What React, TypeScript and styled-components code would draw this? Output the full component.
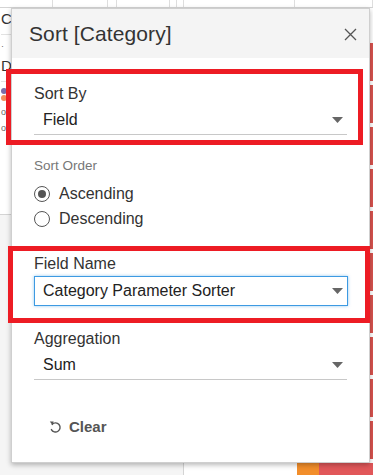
import styled, { createGlobalStyle } from "styled-components";

const GlobalStyle = createGlobalStyle`
  html, body {
    margin: 0;
    padding: 0;
    background: #ffffff;
  }
  * {
    box-sizing: border-box;
  }
`;

const barRows = [
  { width: 190, segments: ["#d9534f"] },
  { width: 180, segments: ["#d9534f"] },
  { width: 175, segments: ["#d9534f"] },
  { width: 170, segments: ["#d9534f"] },
  { width: 168, segments: ["#d9534f"] },
  { width: 160, segments: ["#d9534f"] },
  { width: 150, segments: ["#d9534f"] },
  { width: 140, segments: ["#d9534f"] },
  { width: 130, segments: ["#d9534f"] },
  { width: 120, segments: ["#d9534f"] },
];

const Caret = () => (
  <svg width="11" height="6" viewBox="0 0 11 6">
    <path d="M0 0 L11 0 L5.5 6 Z" fill="#666" />
  </svg>
);

const CloseIcon = () => (
  <svg width="13" height="13" viewBox="0 0 13 13">
    <path d="M1 1 L12 12 M12 1 L1 12" stroke="#555" strokeWidth="1.3" fill="none" />
  </svg>
);

const UndoIcon = () => (
  <svg width="13" height="14" viewBox="0 0 13 14">
    <path
      d="M3.2 4.2 A4.6 4.6 0 1 1 2.4 9.6"
      stroke="#555"
      strokeWidth="1.4"
      fill="none"
      strokeLinecap="round"
    />
    <path d="M0.8 1.4 L4.6 1.6 L3.8 5.4 Z" fill="#555" />
  </svg>
);

const App = () => {
  return (
    <>
      <GlobalStyle />
      <Stage>
        <Workspace>
          <Toolbar>
            <ToolCell $width={53} />
            <ToolCell $width={55} />
            <ToolCell $width={9} />
            <ToolCell $width={53} />
            <ToolCell $width={7} />
            <ToolCell $width={7} />
            <ToolCell $width={111} />
            <ToolCell $width={78} />
          </Toolbar>
          <LeftPane>
            <PaneCard>
              <PaneTitle>C</PaneTitle>
              <PaneRow>·</PaneRow>
              <PaneTitle>D</PaneTitle>
              <Legend>
                <Dot $color="#7b6ea8" />
                <Dot $color="#f28e5b" />
              </Legend>
              <PaneRow>oo</PaneRow>
              <PaneRow>oo</PaneRow>
            </PaneCard>
            <PaneRest />
          </LeftPane>
          <Chart>
            {barRows.map((row, i) => (
              <BarRow key={i}>
                {row.segments.map((c, j) => (
                  <Bar key={j} $color={c} style={{ width: row.width }} />
                ))}
              </BarRow>
            ))}
            <BarRow>
              <Bar $color="#f28e2b" style={{ width: 22 }} />
              <Bar $color="#e15759" style={{ width: 55 }} />
            </BarRow>
          </Chart>
        </Workspace>

        <Dialog>
          <Header>
            <Title>Sort [Category]</Title>
            <CloseButton>
              <CloseIcon />
            </CloseButton>
          </Header>
          <Body>
            <Highlight $ml={-6} $mr={6} $pl={23} $pr={11} $pt={10} $pb={5}>
              <Label>Sort By</Label>
              <LineSelect>
                <SelectText>Field</SelectText>
                <Caret />
              </LineSelect>
            </Highlight>

            <Section $mt={13}>
              <SubLabel>Sort Order</SubLabel>
              <RadioGroup>
                <RadioRow>
                  <RadioCircle $checked />
                  <RadioText>Ascending</RadioText>
                </RadioRow>
                <RadioRow>
                  <RadioCircle />
                  <RadioText>Descending</RadioText>
                </RadioRow>
              </RadioGroup>
            </Section>

            <Highlight $ml={-4} $mr={-1} $pl={21} $pr={17} $pt={3} $pb={12} $mt={15}>
              <Label>Field Name</Label>
              <BoxSelect>
                <SelectText>Category Parameter Sorter</SelectText>
                <Caret />
              </BoxSelect>
            </Highlight>

            <Section $mt={6}>
              <Label>Aggregation</Label>
              <LineSelect>
                <SelectText>Sum</SelectText>
                <Caret />
              </LineSelect>
            </Section>

            <ClearButton>
              <UndoIcon />
              <span>Clear</span>
            </ClearButton>
          </Body>
        </Dialog>
      </Stage>
    </>
  );
};

const Stage = styled.div`
  position: relative;
  width: 373px;
  height: 475px;
  overflow: hidden;
  font-family: "Liberation Sans", Arial, sans-serif;
  color: #333;
`;

const Workspace = styled.div`
  display: grid;
  grid-template-columns: 184px 1fr;
  grid-template-rows: 8px 1fr;
  width: 100%;
  height: 100%;
`;

const Toolbar = styled.div`
  grid-column: 1 / 3;
  display: flex;
  background: #fff;
  border-bottom: 1px solid #d4d4d4;
`;

const ToolCell = styled.div<{ $width: number }>`
  width: ${(p) => p.$width}px;
  border-right: 1px solid #dedede;
`;

const LeftPane = styled.div`
  display: flex;
  flex-direction: column;
  border-right: 1px solid #d4d4d4;
`;

const PaneCard = styled.div`
  height: 207px;
  background: #fff;
  border-bottom: 1px solid #d4d4d4;
  padding: 2px 0 0 1px;
  display: flex;
  flex-direction: column;
  gap: 6px;
`;

const PaneTitle = styled.div`
  font-size: 15px;
  line-height: 18px;
  color: #333;
  border-bottom: 1px solid #e2e2e2;
  padding-bottom: 6px;
`;

const PaneRow = styled.div`
  font-size: 9px;
  color: #666;
  line-height: 10px;
`;

const Legend = styled.div`
  display: flex;
  flex-direction: column;
  gap: 1px;
`;

const Dot = styled.span<{ $color: string }>`
  width: 6px;
  height: 6px;
  border-radius: 50%;
  background: ${(p) => p.$color};
`;

const PaneRest = styled.div`
  flex: 1;
  background: #f5f5f5;
`;

const Chart = styled.div`
  background: #fff;
  display: flex;
  flex-direction: column;
  justify-content: flex-end;
  gap: 4px;
`;

const BarRow = styled.div`
  display: flex;
  justify-content: flex-end;
  height: 38px;
  &:last-child {
    height: 12px;
  }
`;

const Bar = styled.div<{ $color: string }>`
  height: 100%;
  background: ${(p) => p.$color};
`;

const Dialog = styled.div`
  position: absolute;
  left: 11px;
  top: 8px;
  width: 359px;
  height: 455px;
  background: #fff;
  border: 1px solid #cfcfcf;
  box-shadow: 0 2px 5px rgba(0, 0, 0, 0.28);
  display: flex;
  flex-direction: column;
`;

const Header = styled.div`
  height: 49px;
  background: #f4f4f4;
  display: flex;
  align-items: center;
  justify-content: space-between;
  padding: 0 12px 0 17px;
`;

const Title = styled.h2`
  margin: 0;
  font-size: 21px;
  font-weight: 400;
  color: #333;
  letter-spacing: 0.1px;
`;

const CloseButton = styled.div`
  display: flex;
  align-items: center;
  padding-top: 2px;
`;

const Body = styled.div`
  display: flex;
  flex-direction: column;
  padding-top: 11px;
`;

const Highlight = styled.div<{
  $ml: number;
  $mr: number;
  $pl: number;
  $pr: number;
  $pt: number;
  $pb: number;
  $mt?: number;
}>`
  border: 5px solid #ed1c24;
  margin: ${(p) => p.$mt ?? 0}px ${(p) => p.$mr}px 0 ${(p) => p.$ml}px;
  padding: ${(p) => p.$pt}px ${(p) => p.$pr}px ${(p) => p.$pb}px ${(p) => p.$pl}px;
`;

const Section = styled.div<{ $mt: number }>`
  margin-top: ${(p) => p.$mt}px;
  padding: 0 22px 0 22px;
`;

const Label = styled.div`
  font-size: 16px;
  line-height: 19px;
  color: #333;
`;

const SubLabel = styled.div`
  font-size: 13.5px;
  line-height: 16px;
  color: #777;
`;

const LineSelect = styled.div`
  height: 32px;
  display: flex;
  align-items: center;
  justify-content: space-between;
  padding: 2px 4px 0 9px;
  border-bottom: 1px solid #c8c8c8;
`;

const BoxSelect = styled.div`
  margin-top: 3px;
  height: 30px;
  display: flex;
  align-items: center;
  justify-content: space-between;
  padding: 0 4px 0 8px;
  border: 1px solid #3d9ae2;
  box-shadow: 0 0 3px rgba(61, 154, 226, 0.55);
`;

const SelectText = styled.span`
  font-size: 16px;
  color: #222;
`;

const RadioGroup = styled.div`
  display: flex;
  flex-direction: column;
  margin-top: 7px;
`;

const RadioRow = styled.div`
  height: 25px;
  display: flex;
  align-items: center;
  gap: 9px;
`;

const RadioCircle = styled.span<{ $checked?: boolean }>`
  width: 16px;
  height: 16px;
  border-radius: 50%;
  border: 1px solid #555;
  display: flex;
  align-items: center;
  justify-content: center;
  &::after {
    content: "";
    width: 8px;
    height: 8px;
    border-radius: 50%;
    background: ${(p) => (p.$checked ? "#555" : "transparent")};
  }
`;

const RadioText = styled.span`
  font-size: 16px;
  color: #333;
`;

const ClearButton = styled.div`
  margin-top: 38px;
  padding-left: 37px;
  display: flex;
  align-items: center;
  gap: 7px;
  font-size: 15px;
  font-weight: 700;
  color: #555;
`;

export default App;
